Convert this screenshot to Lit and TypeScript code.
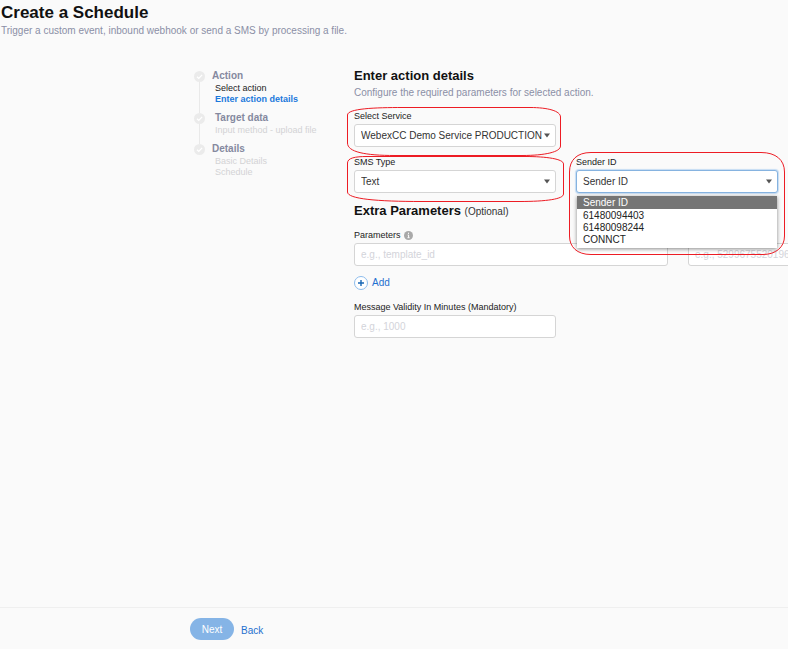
import { LitElement, html, css, svg } from "lit";
import { customElement, property } from "lit/decorators.js";

const steps = [
  { title: "Action", items: [{ text: "Select action", state: "done" }, { text: "Enter action details", state: "current" }] },
  { title: "Target data", inset: true, items: [{ text: "Input method - upload file", state: "" }] },
  { title: "Details", items: [{ text: "Basic Details", state: "" }, { text: "Schedule", state: "" }] },
];

const rings = {
  service: { w: 214, h: 49, d: "M.5 8C.5 1.5 28 .5 56 .5H183C201 .5 213.5 4 213.5 10V39C213.5 45 198 48.5 175 48.5H48C18 48.5 .5 45 .5 36Z" },
  type: { w: 217, h: 46, d: "M.5 7C.5 2 8 .5 20 .5H178C200 .5 216.5 3 216.5 8V38C216.5 43 200 45.5 172 45.5H75C30 45.5 .5 43 .5 36Z" },
  sender: { w: 216, h: 103, d: "M.5 20C.5 8 8 .5 22 .5H192C207 .5 215.5 8 215.5 20V84C215.5 95 207 102.5 194 102.5H22C8 102.5 .5 95 .5 84Z" },
};

@customElement("step-list")
class StepList extends LitElement {
  static styles = css`
    :host { display: block; padding-top: 1px; }
    .steps, .items { list-style: none; margin: 0; padding: 0; }
    .step { display: grid; grid-template-columns: 11px 1fr; column-gap: 7px; }
    .rail { display: flex; flex-direction: column; align-items: center; padding-top: 2px; }
    .rail svg { flex: none; width: 11px; height: 11px; }
    .line { flex: 1; width: 1px; margin-bottom: -2px; background: #e9e9e9; }
    .step:last-child .line { display: none; }
    .body { padding-bottom: 6px; }
    .title { font-size: 10px; line-height: 14px; font-weight: bold; color: #85899f; }
    .inset { padding-left: 3px; }
    .items { padding-left: 3px; font-size: 9px; line-height: 11px; color: #d3d3d5; }
    .done { color: #222; }
    .current { color: #1a78dc; font-weight: bold; }
  `;
  render() {
    return html`<ol class="steps">
      ${steps.map((s) => html`<li class="step">
        <div class="rail">
          <svg viewBox="0 0 11 11" aria-hidden="true"><circle cx="5.5" cy="5.5" r="5.5" fill="#ebebeb"/><path d="M3 5.7 4.8 7.4 8.1 3.9" fill="none" stroke="#fff" stroke-width="1.3"/></svg>
          <span class="line"></span>
        </div>
        <div class="body">
          <div class="title ${s.inset ? "inset" : ""}">${s.title}</div>
          <ul class="items">${s.items.map((i) => html`<li class=${i.state}>${i.text}</li>`)}</ul>
        </div>
      </li>`)}
    </ol>`;
  }
}

@customElement("select-field")
class SelectField extends LitElement {
  @property() label = "";
  @property() ring: keyof typeof rings = "service";
  @property({ type: Array }) options: string[] = [];
  @property({ type: Boolean }) open = false;
  static styles = css`
    :host { display: block; position: relative; }
    .label { display: block; font-size: 9px; line-height: 12px; margin-bottom: 2px; color: #222; }
    .box { position: relative; }
    select {
      appearance: none; display: block; width: 100%; height: 23px; box-sizing: border-box; margin: 0;
      padding: 0 12px 0 6px; border: 1px solid #d5d5d5; border-radius: 3px; background: #fff;
      font: 10px "Liberation Sans", Arial, sans-serif; color: #333; outline: none;
    }
    .open select { border-color: #86b3e0; box-shadow: 0 0 1px 1px #c5dcf3; }
    .arrow { position: absolute; right: 6px; top: 9px; width: 6px; height: 5px; pointer-events: none; }
    .list {
      position: absolute; z-index: 2; top: 26px; left: 1px; right: 1px; margin: 0; padding: 0 0 2px; list-style: none;
      background: #fff; box-shadow: 0 1px 4px #0007; font-size: 10px; line-height: 12px; color: #222;
    }
    .list li { padding: 0 6px; }
    .list .selected { padding-top: 1px; margin-bottom: 1px; background: #757575; color: #fff; }
    .ring { position: absolute; z-index: 3; left: -7px; pointer-events: none; }
    .service { top: -3px; }
    .type { top: 0; }
    .sender { top: -4px; }
  `;
  render() {
    const r = rings[this.ring];
    return html`<label class="label" for="control">${this.label}</label>
      <div class="box ${this.open ? "open" : ""}">
        <select id="control">${this.options.map((o) => html`<option>${o}</option>`)}</select>
        <svg class="arrow" viewBox="0 0 6 5" aria-hidden="true"><path d="M0 .5h6L3 4.5z" fill="#555"/></svg>
        ${this.open ? html`<ul class="list" role="listbox" aria-label=${this.label}>
          ${this.options.map((o, i) => html`<li role="option" class=${i === 0 ? "selected" : ""} aria-selected=${i === 0}>${o}</li>`)}
        </ul>` : ""}
      </div>
      <svg class="ring ${this.ring}" width=${r.w} height=${r.h} viewBox="0 0 ${r.w} ${r.h}" aria-hidden="true">${svg`<path d=${r.d} fill="none" stroke="#ed1c24"/>`}</svg>`;
  }
}

@customElement("app-root")
class AppRoot extends LitElement {
  static styles = css`
    :host {
      display: flex; flex-direction: column; min-height: 100vh; overflow: hidden; background: #fafafa;
      font-family: "Liberation Sans", Arial, sans-serif; color: #111;
    }
    h1, h2, p { margin: 0; }
    .head { padding: 3px 0 0 1px; }
    h1 { font-size: 17px; line-height: 20px; }
    .sub { font-size: 10px; line-height: 12px; color: #8b8fa6; }
    .head .sub { margin-top: 2px; }
    .main { flex: 1; display: grid; grid-template-columns: 160px 1fr; padding: 31px 0 0 194px; }
    h2 { font-size: 13px; line-height: 16px; }
    .form { min-width: 0; }
    .form .sub { margin-top: 3px; }
    .fields { display: grid; grid-template-columns: 202px 202px; gap: 9px 20px; margin: 11px 0 10px; }
    .wide { grid-column: 1; }
    .optional { font-size: 10px; font-weight: normal; color: #333; }
    .label { display: flex; align-items: center; gap: 3px; font-size: 9px; line-height: 12px; margin-bottom: 2px; color: #222; }
    .params { margin-top: 9px; }
    .pair { display: grid; grid-template-columns: 314px 314px; gap: 20px; }
    input {
      display: block; width: 100%; height: 23px; box-sizing: border-box; margin: 0; padding: 0 6px;
      border: 1px solid #d5d5d5; border-radius: 3px; background: #fff; font: 10px "Liberation Sans", Arial, sans-serif; color: #333;
    }
    input::placeholder { color: #d3d4da; opacity: 1; }
    button { border: 0; margin: 0; padding: 0; background: none; font: 10px "Liberation Sans", Arial, sans-serif; }
    .add { display: flex; align-items: center; gap: 4px; margin: 10px 0 11px; line-height: 14px; color: #1f70cf; }
    .validity { width: 202px; }
    .foot { display: flex; align-items: center; gap: 7px; padding: 10px 0 9px 190px; border-top: 1px solid #efefef; }
    .next { width: 44px; height: 22px; border-radius: 11px; background: #85b4e6; color: #fff; }
    .back { font-size: 10px; line-height: 12px; padding-top: 3px; color: #1f70cf; text-decoration: none; }
  `;
  render() {
    return html`
      <header class="head">
        <h1>Create a Schedule</h1>
        <p class="sub">Trigger a custom event, inbound webhook or send a SMS by processing a file.</p>
      </header>
      <main class="main">
        <step-list></step-list>
        <section class="form">
          <h2>Enter action details</h2>
          <p class="sub">Configure the required parameters for selected action.</p>
          <div class="fields">
            <select-field class="wide" label="Select Service" ring="service" .options=${["WebexCC Demo Service PRODUCTION"]}></select-field>
            <select-field class="wide" label="SMS Type" ring="type" .options=${["Text"]}></select-field>
            <select-field label="Sender ID" ring="sender" open .options=${["Sender ID", "61480094403", "61480098244", "CONNCT"]}></select-field>
          </div>
          <h2>Extra Parameters <span class="optional">(Optional)</span></h2>
          <div class="params">
            <label class="label" for="param">Parameters
              <svg width="9" height="9" viewBox="0 0 9 9" aria-hidden="true"><circle cx="4.5" cy="4.5" r="4.5" fill="#a9a9a9"/><path d="M4.5 1.7v1.2M3.7 4h.9v2.6M3.5 6.7h2.1" fill="none" stroke="#fff"/></svg>
            </label>
            <div class="pair">
              <input id="param" placeholder="e.g., template_id">
              <input aria-label="Parameter value" placeholder="e.g., 5299675520196133">
            </div>
          </div>
          <button class="add" type="button">
            <svg width="14" height="14" viewBox="0 0 14 14" aria-hidden="true"><circle cx="7" cy="7" r="6.5" fill="#fff" stroke="#8dbcec"/><path d="M7 4v6M4 7h6" stroke="#1767b5" stroke-width="1.4"/></svg>
            Add
          </button>
          <div class="validity">
            <label class="label" for="validity">Message Validity In Minutes (Mandatory)</label>
            <input id="validity" placeholder="e.g., 1000">
          </div>
        </section>
      </main>
      <footer class="foot">
        <button class="next" type="button">Next</button>
        <a class="back" href="#">Back</a>
      </footer>`;
  }
}
